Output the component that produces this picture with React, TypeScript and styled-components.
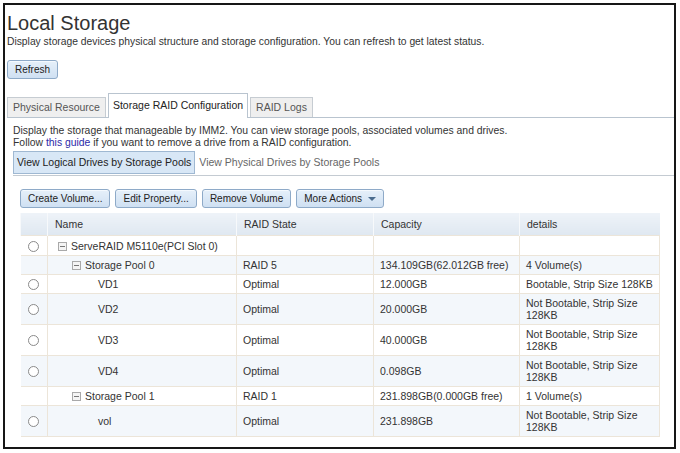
import React from "react";
import styled, { createGlobalStyle, css } from "styled-components";

const GlobalStyle = createGlobalStyle`
  html, body {
    margin: 0;
    padding: 0;
    background: #ffffff;
  }
  body {
    font-family: "Liberation Sans", Arial, sans-serif;
    color: #333;
  }
`;

const Frame = styled.div`
  box-sizing: border-box;
  margin: 3px 0 0 3px;
  width: 673px;
  height: 446px;
  border: 2px solid #161616;
  padding: 6px 0 0 2px;
  overflow: hidden;
`;

const Title = styled.h1`
  margin: 0;
  font-size: 20px;
  font-weight: normal;
  line-height: 24px;
  color: #333;
`;

const Desc = styled.p`
  margin: 1px 0 0;
  font-size: 10.3px;
  line-height: 12px;
  color: #333;
`;

const BlueButton = styled.button`
  font-family: "Liberation Sans", Arial, sans-serif;
  font-size: 10px;
  color: #222;
  height: 19px;
  padding: 0 7px;
  border: 1px solid #8eaac8;
  border-radius: 3px;
  background: linear-gradient(#e6f0fa, #cfe0f2);
  box-shadow: inset 0 1px 0 #f4f9fe;
  cursor: pointer;
  display: inline-flex;
  align-items: center;
  gap: 6px;
`;

const RefreshRow = styled.div`
  margin-top: 11px;
`;

const TabStrip = styled.div`
  display: flex;
  align-items: flex-end;
  gap: 2px;
  margin-top: 14px;
  border-bottom: 1px solid #b9c4cf;
  height: 24px;
`;

const Tab = styled.div<{ $active?: boolean }>`
  box-sizing: border-box;
  font-size: 10.5px;
  padding: 0 5px;
  height: 20px;
  line-height: 18px;
  border: 1px solid #c6ccd2;
  border-bottom: none;
  background: #efefef;
  color: #555;
  ${(p) =>
    p.$active &&
    css`
      height: 25px;
      line-height: 23px;
      margin-bottom: -1px;
      background: #fff;
      color: #222;
      border-color: #b9c4cf;
      padding: 0 4px;
    `}
`;

const Panel = styled.div`
  padding: 7px 0 0 6px;
`;

const Info = styled.div`
  font-size: 10.4px;
  line-height: 12px;
  color: #333;
  a {
    color: #2a2aa8;
    text-decoration: none;
  }
`;

const ViewRow = styled.div`
  display: flex;
  align-items: center;
  margin-top: 2px;
  padding-bottom: 1px;
  border-bottom: 1px solid #c4cbd2;
`;

const ViewToggle = styled.div<{ $active?: boolean }>`
  font-size: 10.5px;
  height: 21px;
  line-height: 21px;
  padding: 0 3px;
  border: 1px solid transparent;
  color: #666;
  ${(p) =>
    p.$active &&
    css`
      background: #d8e7f6;
      border-color: #9fb8d2;
      color: #222;
    `}
`;

const Toolbar = styled.div`
  display: flex;
  gap: 5px;
  margin: 13px 0 0 7px;
`;

const Caret = styled.span`
  width: 0;
  height: 0;
  border-left: 4px solid transparent;
  border-right: 4px solid transparent;
  border-top: 4px solid #4a6c8e;
`;

const Table = styled.table`
  margin: 5px 0 0 7px;
  border-collapse: collapse;
  width: 639px;
  table-layout: fixed;
  font-size: 10.5px;
  color: #333;
`;

const Th = styled.th`
  height: 22px;
  text-align: left;
  font-weight: normal;
  padding: 0 7px;
  background: linear-gradient(#eef3f8, #dfe8f1);
  border-left: 1px solid #f7f9fb;
  color: #333;
  white-space: nowrap;
`;

const Tr = styled.tr<{ $alt?: boolean; $h: number }>`
  background: ${(p) => (p.$alt ? "#f3f7fb" : "#ffffff")};
  height: ${(p) => p.$h}px;
`;

const Td = styled.td<{ $indent?: number }>`
  border: 1px solid #ece5d9;
  padding: 0 6px 0 ${(p) => 6 + (p.$indent || 0)}px;
  line-height: 12px;
  vertical-align: middle;
  white-space: ${(p) => (p.$indent !== undefined ? "nowrap" : "normal")};
`;

const RadioCell = styled.td`
  border: 1px solid #ece5d9;
  border-left: none;
  text-align: center;
  padding: 0;
`;

const Radio = styled.span`
  display: inline-block;
  width: 9px;
  height: 9px;
  border: 1px solid #8a8a8a;
  border-radius: 50%;
  background: #fff;
  vertical-align: middle;
`;

const Expander = styled.span`
  display: inline-block;
  position: relative;
  box-sizing: border-box;
  width: 9px;
  height: 9px;
  border: 1px solid #a9a9a9;
  background: #f4f4f4;
  margin-right: 4px;
  vertical-align: -1px;
  &::after {
    content: "";
    position: absolute;
    left: 1px;
    right: 1px;
    top: 3px;
    height: 1px;
    background: #777;
  }
`;

type Row = {
  name: string;
  level: number;
  radio: boolean;
  expander: boolean;
  state: string;
  cap: string;
  details: string;
  h: number;
};

const rows: Row[] = [
  { name: "ServeRAID M5110e(PCI Slot 0)", level: 0, radio: true, expander: true, state: "", cap: "", details: "", h: 20 },
  { name: "Storage Pool 0", level: 1, radio: false, expander: true, state: "RAID 5", cap: "134.109GB(62.012GB free)", details: "4 Volume(s)", h: 19 },
  { name: "VD1", level: 2, radio: true, expander: false, state: "Optimal", cap: "12.000GB", details: "Bootable, Strip Size 128KB", h: 19 },
  { name: "VD2", level: 2, radio: true, expander: false, state: "Optimal", cap: "20.000GB", details: "Not Bootable, Strip Size 128KB", h: 31 },
  { name: "VD3", level: 2, radio: true, expander: false, state: "Optimal", cap: "40.000GB", details: "Not Bootable, Strip Size 128KB", h: 31 },
  { name: "VD4", level: 2, radio: true, expander: false, state: "Optimal", cap: "0.098GB", details: "Not Bootable, Strip Size 128KB", h: 31 },
  { name: "Storage Pool 1", level: 1, radio: false, expander: true, state: "RAID 1", cap: "231.898GB(0.000GB free)", details: "1 Volume(s)", h: 19 },
  { name: "vol", level: 2, radio: true, expander: false, state: "Optimal", cap: "231.898GB", details: "Not Bootable, Strip Size 128KB", h: 31 },
];

const colWidths = [27, 189, 137, 146, 140];

const indentFor = (r: Row) => (r.level === 0 ? 4 : r.level === 1 ? 18 : 44);

export default function App() {
  return (
    <>
      <GlobalStyle />
      <Frame>
        <Title>Local Storage</Title>
        <Desc>
          Display storage devices physical structure and storage configuration. You can refresh to get latest status.
        </Desc>
        <RefreshRow>
          <BlueButton>Refresh</BlueButton>
        </RefreshRow>
        <TabStrip>
          <Tab>Physical Resource</Tab>
          <Tab $active>Storage RAID Configuration</Tab>
          <Tab>RAID Logs</Tab>
        </TabStrip>
        <Panel>
          <Info>
            Display the storage that manageable by IMM2. You can view storage pools, associated volumes and drives.
            <br />
            Follow <a href="#">this guide</a> if you want to remove a drive from a RAID configuration.
          </Info>
          <ViewRow>
            <ViewToggle $active>View Logical Drives by Storage Pools</ViewToggle>
            <ViewToggle>View Physical Drives by Storage Pools</ViewToggle>
          </ViewRow>
          <Toolbar>
            <BlueButton>Create Volume...</BlueButton>
            <BlueButton>Edit Property...</BlueButton>
            <BlueButton>Remove Volume</BlueButton>
            <BlueButton>
              More Actions <Caret />
            </BlueButton>
          </Toolbar>
          <Table>
            <colgroup>
              {colWidths.map((w, i) => (
                <col key={i} style={{ width: w }} />
              ))}
            </colgroup>
            <thead>
              <tr>
                <Th />
                <Th>Name</Th>
                <Th>RAID State</Th>
                <Th>Capacity</Th>
                <Th>details</Th>
              </tr>
            </thead>
            <tbody>
              {rows.map((r, i) => (
                <Tr key={r.name} $alt={i % 2 === 1} $h={r.h}>
                  <RadioCell>{r.radio && <Radio />}</RadioCell>
                  <Td $indent={indentFor(r)}>
                    {r.expander && <Expander />}
                    {r.name}
                  </Td>
                  <Td>{r.state}</Td>
                  <Td>{r.cap}</Td>
                  <Td>{r.details}</Td>
                </Tr>
              ))}
            </tbody>
          </Table>
        </Panel>
      </Frame>
    </>
  );
}
